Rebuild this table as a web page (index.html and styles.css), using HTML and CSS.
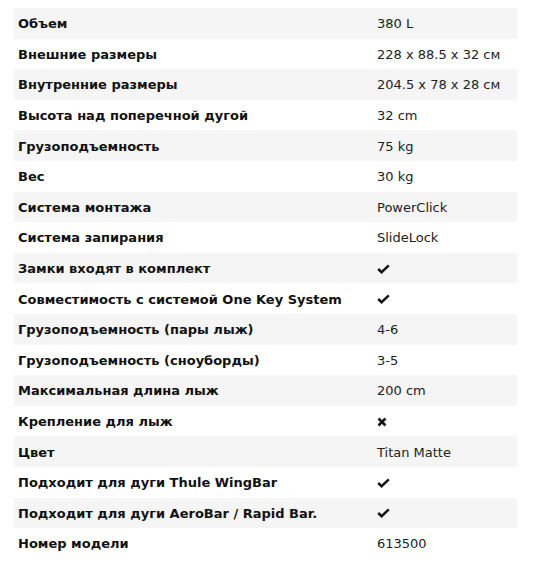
FILE: index.html
```html
<!DOCTYPE html>
<html lang="ru">
<head>
<meta charset="utf-8">
<link rel="stylesheet" href="styles.css">
</head>
<body>
<div class="specs">
  <div class="row"><div class="k">Объем</div><div class="v">380 L</div></div>
  <div class="row"><div class="k">Внешние размеры</div><div class="v">228 x 88.5 x 32 см</div></div>
  <div class="row"><div class="k">Внутренние размеры</div><div class="v">204.5 x 78 x 28 см</div></div>
  <div class="row"><div class="k">Высота над поперечной дугой</div><div class="v">32 cm</div></div>
  <div class="row"><div class="k">Грузоподъемность</div><div class="v">75 kg</div></div>
  <div class="row"><div class="k">Вес</div><div class="v">30 kg</div></div>
  <div class="row"><div class="k">Система монтажа</div><div class="v">PowerClick</div></div>
  <div class="row"><div class="k">Система запирания</div><div class="v">SlideLock</div></div>
  <div class="row"><div class="k">Замки входят в комплект</div><div class="v"><svg class="ico" width="13" height="10" viewBox="0 0 13 10"><path d="M1.2 5 L4.6 8.2 L11.8 1.4" fill="none" stroke="#111" stroke-width="2.5"/></svg></div></div>
  <div class="row"><div class="k">Совместимость с системой One Key System</div><div class="v"><svg class="ico" width="13" height="10" viewBox="0 0 13 10"><path d="M1.2 5 L4.6 8.2 L11.8 1.4" fill="none" stroke="#111" stroke-width="2.5"/></svg></div></div>
  <div class="row"><div class="k">Грузоподъемность (пары лыж)</div><div class="v">4-6</div></div>
  <div class="row"><div class="k">Грузоподъемность (сноуборды)</div><div class="v">3-5</div></div>
  <div class="row"><div class="k">Максимальная длина лыж</div><div class="v">200 cm</div></div>
  <div class="row"><div class="k">Крепление для лыж</div><div class="v"><svg class="ico" width="10" height="10" viewBox="0 0 10 10"><path d="M1.5 1.5 L8.5 8.5 M8.5 1.5 L1.5 8.5" fill="none" stroke="#111" stroke-width="2.5"/></svg></div></div>
  <div class="row"><div class="k">Цвет</div><div class="v">Titan Matte</div></div>
  <div class="row"><div class="k">Подходит для дуги Thule WingBar</div><div class="v"><svg class="ico" width="13" height="10" viewBox="0 0 13 10"><path d="M1.2 5 L4.6 8.2 L11.8 1.4" fill="none" stroke="#111" stroke-width="2.5"/></svg></div></div>
  <div class="row"><div class="k">Подходит для дуги AeroBar / Rapid Bar.</div><div class="v"><svg class="ico" width="13" height="10" viewBox="0 0 13 10"><path d="M1.2 5 L4.6 8.2 L11.8 1.4" fill="none" stroke="#111" stroke-width="2.5"/></svg></div></div>
  <div class="row"><div class="k">Номер модели</div><div class="v">613500</div></div>
</div>
</body>
</html>
```

FILE: styles.css
```css
html, body {
  margin: 0;
  background: #fff;
}
body {
  padding: 8px 27px 0 14px;
  font-family: "DejaVu Sans", Verdana, sans-serif;
  font-size: 13px;
  color: #222;
}
.specs {
  display: flex;
  flex-direction: column;
}
.row {
  display: grid;
  grid-template-columns: 359px 1fr;
  height: 30.6px;
  align-items: center;
}
.row:nth-child(odd) {
  background: #f5f5f5;
}
.k {
  padding: 1px 0 0 4px;
  font-weight: bold;
  color: #111;
}
.v {
  padding: 1px 0 0 4px;
  color: #222;
  display: flex;
  align-items: center;
}
.ico {
  display: block;
}
```
